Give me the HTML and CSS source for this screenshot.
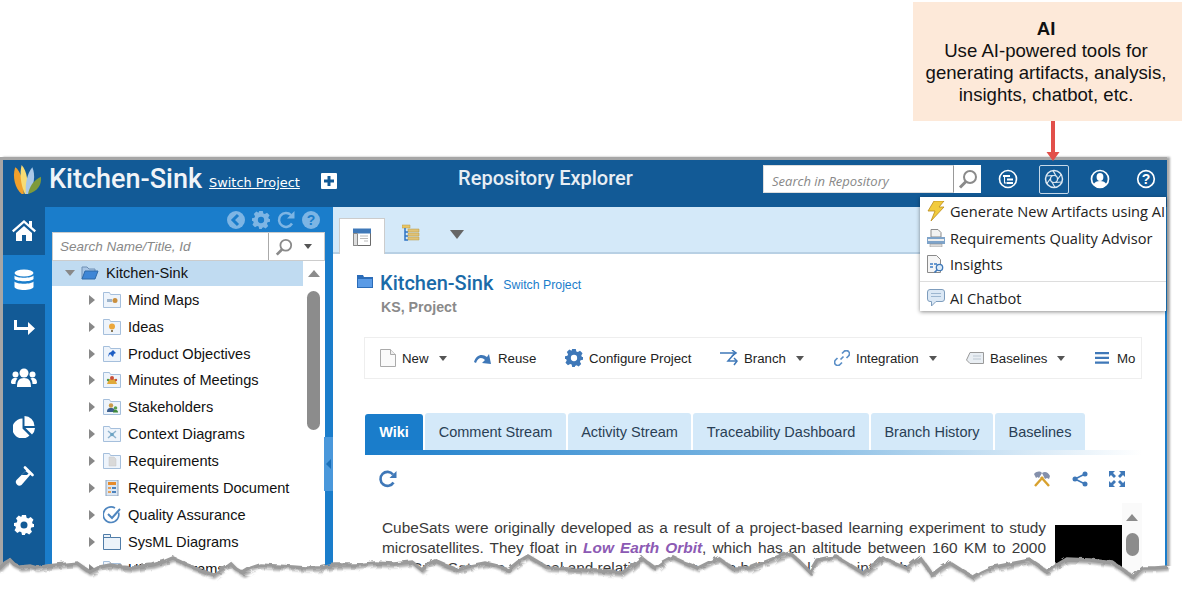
FILE: index.html
```html
<!DOCTYPE html>
<html lang="en">
<head>
<meta charset="UTF-8" />
<title>Repository Explorer</title>
<link rel="stylesheet" href="styles.css">
</head>
<body>

<div class="callout-row">
  <div class="callout">
    <b>AI</b><br>
    Use AI-powered tools for<br>
    generating artifacts, analysis,<br>
    insights, chatbot, etc.
  </div>
</div>
<svg class="arrow" width="14" height="42" viewBox="0 0 14 42"><path d="M5 0h4v31h4.500l-6.500 9-6.500-9H5z" fill="#e2504a"/></svg>

<div class="window">
  <header class="topbar">
    <div class="brand">
      <svg class="logo" width="30" height="30" viewBox="0 0 28 28">
        <path d="M9 27C3 22 0 11 3 2c5 3 8 14 8 25z" fill="#f0a02c"/>
        <path d="M12 27C8 18 7 8 9 0c5 5 7 18 4 27z" fill="#f8dc74"/>
        <path d="M13 27c-1-9 1-19 6-25 3 7 2 18-4 25z" fill="#a9c8e8"/>
        <path d="M15 27c1-6 5-13 12-16 1 7-3 14-12 16z" fill="#7e9a3a"/>
      </svg>
      <span class="brand-name">Kitchen-Sink</span>
      <a class="brand-link">Switch Project</a>
      <svg class="plus" width="16" height="16" viewBox="0 0 16 16"><path d="M1 0h14a1 1 0 0 1 1 1v14a1 1 0 0 1-1 1H1a1 1 0 0 1-1-1V1a1 1 0 0 1 1-1zm5.500 3v3.500H3v3h3.500V13h3V9.500H13v-3H9.500V3z" fill="#fff" fill-rule="evenodd"/></svg>
    </div>
    <div class="topbar-title">Repository Explorer</div>
    <div class="top-search">
      <span class="top-search-input">Search in Repository</span>
      <span class="top-search-btn">
        <svg width="20" height="20" viewBox="0 0 20 20"><circle cx="12" cy="8" r="6" fill="none" stroke="#8a8a8a" stroke-width="2"/><path d="M8 12.500 2 18.500" stroke="#8a8a8a" stroke-width="3"/></svg>
      </span>
    </div>
    <div class="top-icons">
      <span class="top-icon">
        <svg width="20" height="20" viewBox="0 0 20 20" fill="none" stroke="#fff"><circle cx="10" cy="10" r="8.500" stroke-width="1.600"/><path d="M5 7h7M9 10.500h6M9 14h6" stroke-width="1.800"/><path d="M6.500 7v7H9" stroke-width="1.100"/></svg>
      </span>
      <span class="top-icon is-active">
        <svg width="20" height="20" viewBox="0 0 20 20" fill="none" stroke="#dfe9f2" stroke-width="1.200"><circle cx="10" cy="10" r="8.500" stroke-width="1.500"/><circle cx="10" cy="10" r="3.500"/><path d="M12 7 9 1.600M13.500 10.500 17.500 5M11 13.500 17.800 13M8 13 11 18.500M6.500 9.500 2.500 15M9 6.500 2.200 7"/></svg>
      </span>
      <span class="top-icon">
        <svg width="20" height="20" viewBox="0 0 20 20"><circle cx="10" cy="10" r="8.500" fill="none" stroke="#fff" stroke-width="1.700"/><ellipse cx="10" cy="8" rx="3.400" ry="4" fill="#fff"/><path d="M3.500 15.500c1-2.500 3.500-3.500 6.500-3.500s5.500 1 6.500 3.500a8 8 0 0 1-13 0z" fill="#fff"/></svg>
      </span>
      <span class="top-icon">
        <svg width="20" height="20" viewBox="0 0 20 20"><circle cx="10" cy="10" r="8.300" fill="none" stroke="#fff" stroke-width="1.700"/><text x="10" y="15" text-anchor="middle" class="help-q">?</text></svg>
      </span>
    </div>
  </header>

  <div class="main">
    <nav class="rail">
      <a class="rail-item">
        <svg width="24" height="22" viewBox="0 0 24 22"><path d="M12 1 0 11.500l1.500 1.700L12 4l10.500 9.200 1.500-1.700-4-3.500V2h-3v3.400zM4 14v8h6v-6h4v6h6v-8l-8-7z" fill="#fff"/></svg>
      </a>
      <a class="rail-item is-active">
        <svg width="20" height="22" viewBox="0 0 20 22" fill="#fff"><ellipse cx="10" cy="4" rx="9.500" ry="3.500"/><path d="M.5 6.500c2 3 17 3 19 0V10c-2 3-17 3-19 0zM.5 12.500c2 3 17 3 19 0V18c-1 4-18 4-19 0z"/></svg>
      </a>
      <a class="rail-item">
        <svg width="22" height="18" viewBox="0 0 22 18"><path d="M1 0h3v7h11V2l7 6.500-7 6.500v-5H1z" fill="#fff"/></svg>
      </a>
      <a class="rail-item">
        <svg width="26" height="20" viewBox="0 0 26 20" fill="#fff"><circle cx="13" cy="5" r="4.500"/><circle cx="4.500" cy="6.500" r="3"/><circle cx="21.500" cy="6.500" r="3"/><path d="M6 19c0-6 2-9 7-9s7 3 7 9zM0 15c0-3 1-5 4.500-5 1 0 1.500.3 2 .5C5 12 4.500 14 4.500 16H1zM26 15c0-3-1-5-4.500-5-1 0-1.500.3-2 .5 1.500 1.500 2 3.500 2 5.500H25z"/></svg>
      </a>
      <a class="rail-item">
        <svg width="22" height="22" viewBox="0 0 22 22" fill="#fff"><path d="M9.500 2.500v10l7 7A10 10 0 1 1 9.500 2.500z"/><path d="M11.500 0a10 10 0 0 1 10 10h-10z"/><path d="M12.500 12h9.500a10 10 0 0 1-3 6.500z"/></svg>
      </a>
      <a class="rail-item">
        <svg width="20" height="20" viewBox="0 0 20 20"><path d="M11 1.500l7.500 7.500" stroke="#fff" stroke-width="2.600" stroke-linecap="round"/><path d="M13 3.500 2.500 14a3.600 3.600 0 0 0 5 5L17 8z" fill="#fff"/><path d="M11.500 5 7.500 9h5.500l1.500-1.500z" fill="#125a96"/></svg>
      </a>
      <a class="rail-item">
        <svg width="20" height="20" viewBox="0 0 20 20"><path fill="#fff" fill-rule="evenodd" d="M8 0h4l.6 2.700 1.700.7 2.400-1.400 2.800 2.800-1.400 2.400.7 1.700L20 9v3l-2.700.6-.7 1.700 1.400 2.400-2.800 2.800-2.400-1.400-1.700.7L11 20H8l-.6-2.700-1.700-.7-2.400 1.400L.5 15.200l1.400-2.400-.7-1.700L0 11V8l2.700-.6.700-1.700L2 3.300 4.800.5l2.400 1.400zM10 6.500a3.500 3.500 0 1 0 0 7 3.500 3.500 0 0 0 0-7z"/></svg>
      </a>
    </nav>

    <section class="tree-panel">
      <div class="tree-tools">
        <svg width="18" height="18" viewBox="0 0 18 18"><circle cx="9" cy="9" r="9" fill="#7db5e4"/><path d="M11 4 6 9l5 5" fill="none" stroke="#1a7dcb" stroke-width="3"/></svg>
        <svg width="18" height="18" viewBox="0 0 20 20"><path fill="#7db5e4" fill-rule="evenodd" d="M8 0h4l.6 2.700 1.700.7 2.400-1.400 2.800 2.800-1.400 2.400.7 1.700L20 9v3l-2.700.6-.7 1.700 1.400 2.400-2.800 2.800-2.400-1.400-1.700.7L11 20H8l-.6-2.700-1.700-.7-2.400 1.400L.5 15.200l1.400-2.400-.7-1.700L0 11V8l2.700-.6.700-1.700L2 3.300 4.800.5l2.400 1.400zM10 6.500a3.500 3.500 0 1 0 0 7 3.500 3.500 0 0 0 0-7z"/></svg>
        <svg width="18" height="18" viewBox="0 0 18 18"><path d="M15 12.500A7 7 0 1 1 14 4" fill="none" stroke="#7db5e4" stroke-width="2.500"/><path d="M17.500 0v7.500H10z" fill="#7db5e4"/></svg>
        <svg width="18" height="18" viewBox="0 0 18 18"><circle cx="9" cy="9" r="9" fill="#7db5e4"/><text x="9" y="14" text-anchor="middle" class="tool-q">?</text></svg>
      </div>
      <div class="tree-search">
        <span class="tree-search-input">Search Name/Title, Id</span>
        <span class="tree-search-btn">
          <svg width="18" height="18" viewBox="0 0 20 20"><circle cx="12" cy="8" r="6" fill="none" stroke="#8a8a8a" stroke-width="2"/><path d="M8 12.500 2 18.500" stroke="#8a8a8a" stroke-width="3"/></svg>
          <i class="caret"></i>
        </span>
      </div>
      <div class="tree-body">
        <ul class="tree">
          <li class="tree-root">
            <i class="twist twist-open"></i>
            <svg class="node-icon" width="18" height="14" viewBox="0 0 18 14"><path d="M1 13V1h5l2 2h6v3" fill="#a9c6e6" stroke="#6f8fb4"/><path d="M1 13 4 5h13l-3 8z" fill="#3e86d6" stroke="#2f6aa8"/></svg>
            Kitchen-Sink
          </li>
          <li><i class="twist"></i><svg class="node-icon" width="18" height="16" viewBox="0 0 18 16"><use href="#folder"/><path d="M4 7h5v3H4z" fill="#9db4cc"/><circle cx="12" cy="8.500" r="2.500" fill="#c98f3e"/></svg>Mind Maps</li>
          <li><i class="twist"></i><svg class="node-icon" width="18" height="16" viewBox="0 0 18 16"><use href="#folder"/><circle cx="9" cy="7.500" r="3" fill="#eba73b"/><path d="M8 11h2v2H8z" fill="#8a7a5a"/></svg>Ideas</li>
          <li><i class="twist"></i><svg class="node-icon" width="18" height="16" viewBox="0 0 18 16"><use href="#folder"/><path d="M10 4l3 3-2 1-1 3-3-3-2 3 1-4 2-1z" fill="#1f5fc4"/></svg>Product Objectives</li>
          <li><i class="twist"></i><svg class="node-icon" width="18" height="16" viewBox="0 0 18 16"><use href="#folder"/><path d="M4 12l2-5h6l2 5z" fill="#e0a93a"/><circle cx="9" cy="6" r="2" fill="#c9503c"/><circle cx="5" cy="8" r="1.200" fill="#4d9a4a"/><circle cx="13" cy="8" r="1.200" fill="#c9503c"/></svg>Minutes of Meetings</li>
          <li><i class="twist"></i><svg class="node-icon" width="18" height="16" viewBox="0 0 18 16"><use href="#folder"/><circle cx="8" cy="6.500" r="2.200" fill="#c99a4a"/><path d="M4 13c0-3 1-4 4-4s4 1 4 4z" fill="#3c5f8e"/><circle cx="12.500" cy="9" r="1.800" fill="#5aa04a"/><path d="M10 13.500c0-2 1-2.500 2.500-2.500s2.500.5 2.500 2.500z" fill="#3f8a3a"/></svg>Stakeholders</li>
          <li><i class="twist"></i><svg class="node-icon" width="18" height="16" viewBox="0 0 18 16"><use href="#folder"/><path d="M5 5l8 7M13 5l-8 7" stroke="#8db3cf" stroke-width="1.500"/><circle cx="9" cy="8.500" r="1.800" fill="#6ba4c4"/></svg>Context Diagrams</li>
          <li><i class="twist"></i><svg class="node-icon" width="18" height="16" viewBox="0 0 18 16"><use href="#folder"/><path d="M6 4h5l2 2v7H6z" fill="#d9d9d9" stroke="#c4c4c4" stroke-width=".5"/></svg>Requirements</li>
          <li><i class="twist"></i><svg class="node-icon" width="18" height="16" viewBox="0 0 18 16"><path d="M3 0h12v16H3z" fill="#dbe6f2" stroke="#8ca3bd"/><path d="M5 2h8v3H5z" fill="#e58a2c"/><path d="M5 7h3v2H5zM5 11h3v2H5z" fill="#e5a15c"/><path d="M9 7h4v2H9zM9 11h4v2H9z" fill="#4d82bc"/></svg>Requirements Document</li>
          <li><i class="twist"></i><svg class="node-icon" width="18" height="18" viewBox="0 0 18 18"><path d="M15.500 6.500A7.800 7.800 0 1 1 12 2" fill="none" stroke="#4f86bf" stroke-width="1.700"/><path d="M5 8l4 4 8-9" fill="none" stroke="#4f86bf" stroke-width="2"/></svg>Quality Assurance</li>
          <li><i class="twist"></i><svg class="node-icon" width="18" height="16" viewBox="0 0 18 16"><path d="M.5 15.500V.5h7v3h10v12z" fill="#ecf3fa" stroke="#4f7ca8"/><path d="M.5 3.500h7" stroke="#4f7ca8"/></svg>SysML Diagrams</li>
          <li><i class="twist"></i><svg class="node-icon" width="18" height="16" viewBox="0 0 18 16"><use href="#folder"/></svg>UML Diagrams</li>
        </ul>
        <div class="tree-scroll">
          <i class="scroll-up"></i>
          <div class="tree-thumb"></div>
        </div>
      </div>
      <div class="splitter"><i></i></div>
    </section>

    <section class="content">
      <div class="view-tabs">
        <span class="view-tab is-active">
          <svg width="18" height="18" viewBox="0 0 18 18"><path d="M.5 3.500h17v14H.5z" fill="#fff" stroke="#6b6b6b"/><path d="M0 .500h18v5H0z" fill="#3f78b8"/><path d="M.5 5.500h4v12h-4z" fill="#ddd" stroke="#8a8a8a"/><path d="M7 8h8M7 10.500h8M11 13h4" stroke="#bbb"/></svg>
        </span>
        <span class="view-tab">
          <svg width="18" height="18" viewBox="0 0 18 18"><path d="M0 1h8v3H0z" fill="#e8c565" stroke="#b89a46" stroke-width=".5"/><path d="M3 4v12h3M3 8h3M3 12h3" stroke="#2f74c4" stroke-width="1.500" fill="none"/><path d="M6 5h11v3H6zM6 9h11v3H6zM6 13h11v3H6z" fill="#e0c277" stroke="#b89a46" stroke-width=".5"/></svg>
        </span>
        <i class="view-more"></i>
      </div>

      <div class="page">
        <div class="page-head">
          <svg class="page-folder" width="16" height="14" viewBox="0 0 16 14"><path d="M0 1h6l1 2h9v11H0z" fill="#2b6cb8"/><path d="M1 5h14v8H1z" fill="#5a9be6"/></svg>
          <h1 class="page-title">Kitchen-Sink</h1>
          <a class="page-switch">Switch Project</a>
        </div>
        <div class="page-sub">KS, Project</div>

        <div class="actions">
          <span class="action w-new">
            <svg width="16" height="18" viewBox="0 0 16 18"><path d="M.5.500h10l5 5v12H.5z" fill="#fafafa" stroke="#aaa"/><path d="M10.500.500v5h5" fill="#eee" stroke="#aaa"/></svg>New<i class="caret"></i>
          </span>
          <span class="action w-reuse">
            <svg width="18" height="14" viewBox="0 0 18 14"><path d="M0 11C2 4 8 2 13 6l2-3 2 10-9-1 3-3C8 6 4 6 2 12z" fill="#3f78b8"/></svg>Reuse
          </span>
          <span class="action w-config">
            <svg width="18" height="18" viewBox="0 0 20 20"><path fill="#3f78b8" fill-rule="evenodd" d="M8 0h4l.6 2.700 1.700.7 2.400-1.400 2.800 2.800-1.400 2.400.7 1.700L20 9v3l-2.700.6-.7 1.700 1.400 2.400-2.800 2.800-2.400-1.400-1.700.7L11 20H8l-.6-2.700-1.700-.7-2.400 1.400L.5 15.200l1.400-2.400-.7-1.700L0 11V8l2.700-.6.700-1.700L2 3.300 4.800.5l2.400 1.400zM10 6.500a3.500 3.500 0 1 0 0 7 3.500 3.500 0 0 0 0-7z"/></svg>Configure Project
          </span>
          <span class="action w-branch">
            <svg width="18" height="16" viewBox="0 0 18 16" fill="none" stroke="#3f78b8" stroke-width="1.500"><path d="M0 3h15l-7 8h9"/><path d="M12 0l4 3-4 3M14 8l3 3-3 4"/></svg>Branch<i class="caret"></i>
          </span>
          <span class="action w-integ">
            <svg width="16" height="16" viewBox="0 0 16 16" fill="none" stroke="#5b8fc7" stroke-width="1.700"><path d="M6.500 9.500 9.500 6.500M8 3.500l2-2a3 3 0 0 1 4.500 4.500l-2 2M8 12.500l-2 2A3 3 0 0 1 1.500 10l2-2"/></svg>Integration<i class="caret"></i>
          </span>
          <span class="action w-base">
            <svg width="18" height="12" viewBox="0 0 18 12"><path d="M4 .5h13.500v11H4L.5 8z" fill="#e9eef3" stroke="#9a9a9a"/><path d="M7 4h8M7 7h8" stroke="#bcc7d2"/></svg>Baselines<i class="caret"></i>
          </span>
          <span class="action w-more">
            <svg width="14" height="12" viewBox="0 0 14 12" fill="#3f78b8"><path d="M0 0h14v2.200H0zM0 4.800h14V7H0zM0 9.600h14v2.200H0z"/></svg>Mo
          </span>
        </div>

        <div class="tabs">
          <span class="tab is-active w-wiki">Wiki</span>
          <span class="tab w-comment">Comment Stream</span>
          <span class="tab w-activity">Activity Stream</span>
          <span class="tab w-trace">Traceability Dashboard</span>
          <span class="tab w-history">Branch History</span>
          <span class="tab w-baselines">Baselines</span>
        </div>
        <div class="tabs-line"></div>

        <div class="wiki-tools">
          <svg width="18" height="18" viewBox="0 0 18 18"><path d="M14.500 12.500A7 7 0 1 1 14 4.500" fill="none" stroke="#3f78b8" stroke-width="2.600"/><path d="M17.500 1v7h-7z" fill="#3f78b8"/></svg>
          <span class="wiki-tools-right">
            <svg width="18" height="16" viewBox="0 0 18 16"><path d="M2 15 10 6M16 15 8 6" stroke="#d8a12e" stroke-width="2.400"/><path d="M1 3c3-3 6-3 8-1l-3 5-1.500-1L3 7zM9 2c3-2 6-1 8 3l-1 3-2-1-2 1z" fill="#8490ab"/></svg>
            <svg width="16" height="16" viewBox="0 0 16 16" fill="#3f78b8"><circle cx="13" cy="3" r="2.500"/><circle cx="3" cy="8" r="2.500"/><circle cx="13" cy="13" r="2.500"/><path d="M3 8l10-5M3 8l10 5" stroke="#3f78b8" stroke-width="1.500"/></svg>
            <svg width="16" height="16" viewBox="0 0 16 16" fill="#3f78b8"><path d="M0 0h6L4 2l3 3-2 2-3-3-2 2zM16 0v6l-2-2-3 3-2-2 3-3-2-2zM0 16v-6l2 2 3-3 2 2-3 3 2 2zM16 16h-6l2-2-3-3 2-2 3 3 2-2z"/></svg>
          </span>
        </div>

        <div class="wiki">
          <p class="wiki-text">CubeSats were originally developed as a result of a project-based learning experiment to study microsatellites. They float in <b class="wiki-link">Low Earth Orbit</b>, which has an altitude between 160 KM to 2000 km. CubeSats are nominal and relatively low-cost to build and launch into orbit.</p>
          <div class="wiki-img"></div>
          <div class="wiki-scroll">
            <i class="scroll-up"></i>
            <div class="wiki-thumb"></div>
          </div>
        </div>
      </div>
    </section>
  </div>

  <div class="ai-menu">
    <div class="ai-item">
      <svg width="18" height="20" viewBox="0 0 18 20"><path d="M7 0h10l-5 6h5L4 20l4-10H1z" fill="#f2cb3c" stroke="#b98a1d" stroke-width=".8"/></svg>
      Generate New Artifacts using AI
    </div>
    <div class="ai-item">
      <svg width="18" height="18" viewBox="0 0 18 18"><path d="M4 .5h7l3 3V8H4z" fill="#f2f2f2" stroke="#8a8a8a"/><path d="M0 8h18v7H0z" fill="#7ea3c9"/><path d="M1 11h16" stroke="#eee" stroke-width="2"/><path d="M3 15h12v3H3z" fill="#dcdcdc" stroke="#8a8a8a" stroke-width=".5"/></svg>
      Requirements Quality Advisor
    </div>
    <div class="ai-item">
      <svg width="18" height="18" viewBox="0 0 18 18"><path d="M.5.500h9l4 4v13H.5z" fill="#f5f5f5" stroke="#8a8a8a"/><path d="M3 8h3v2H3zM3 11h3v2H3zM7 8h3v2H7z" fill="#6a9ad0"/><circle cx="12.500" cy="12.500" r="3.200" fill="#dcebf8" stroke="#3f78b8" stroke-width="1.300"/><path d="M10 15l-2.500 2.500" stroke="#3f78b8" stroke-width="1.700"/></svg>
      Insights
    </div>
    <div class="ai-sep"></div>
    <div class="ai-item">
      <svg width="18" height="18" viewBox="0 0 18 18"><path d="M3 .5h12a2.500 2.500 0 0 1 2.500 2.500v7a2.500 2.500 0 0 1-2.500 2.500H9L4.500 17v-4.500H3A2.500 2.500 0 0 1 .5 10V3A2.500 2.500 0 0 1 3 .5z" fill="#dbe8f5" stroke="#7e9dbd"/><path d="M4 4.500h10M4 7.500h10" stroke="#9cb6d0"/></svg>
      AI Chatbot
    </div>
  </div>
</div>

<svg class="defs" width="0" height="0">
  <symbol id="folder" viewBox="0 0 18 16"><path d="M.5 15.500V.5h6l1 2h10v13z" fill="#eef4fb" stroke="#a5bfdc"/></symbol>
</svg>

<!-- torn edge at the bottom of the capture -->
<svg class="tear" width="1184" height="60" viewBox="0 532 1184 60">
  <filter id="rough" x="-2%" y="-30%" width="104%" height="160%">
    <feTurbulence type="fractalNoise" baseFrequency="0.12" numOctaves="2" seed="4" result="n"/>
    <feDisplacementMap in="SourceGraphic" in2="n" scale="5"/>
  </filter>
  <g filter="url(#rough)">
    <path class="tear-fill" d="M-20 568 0 568 5 563 10 560 14 564 20 567 30 566 37 568 47 566 57 565 68 564 77 563 84 568 90 572 100 567 110 565 122 567 133 568 143 566 153 565 163 562 173 558 180 561 187 565 200 570 213 575 222 569 230 563 236 569 243 573 251 568 260 565 276 566 293 567 306 568 320 568 335 565 355 565 375 563 394 564 412 562 417 566 422 570 428 564 435 561 447 566 458 570 470 566 485 563 497 566 508 570 518 562 528 556 538 562 548 568 570 569 598 571 622 573 632 566 642 558 648 563 655 568 663 562 672 557 685 563 698 568 708 563 718 558 725 563 732 568 750 568 760 564 770 560 780 556 790 553 800 562 810 572 817 560 827 558 837 557 850 565 863 573 873 565 883 558 895 563 907 568 913 563 920 558 926 566 932 575 941 568 950 563 961 570 973 577 981 572 990 568 1010 564 1030 560 1039 566 1047 572 1057 565 1067 559 1090 560 1113 563 1123 570 1133 577 1138 572 1143 568 1155 568 1168 567 1200 567 1200 610 -20 610z"/>
    <path class="tear-line" d="M-10 568 0 568 5 563 10 560 14 564 20 567 30 566 37 568 47 566 57 565 68 564 77 563 84 568 90 572 100 567 110 565 122 567 133 568 143 566 153 565 163 562 173 558 180 561 187 565 200 570 213 575 222 569 230 563 236 569 243 573 251 568 260 565 276 566 293 567 306 568 320 568 335 565 355 565 375 563 394 564 412 562 417 566 422 570 428 564 435 561 447 566 458 570 470 566 485 563 497 566 508 570 518 562 528 556 538 562 548 568 570 569 598 571 622 573 632 566 642 558 648 563 655 568 663 562 672 557 685 563 698 568 708 563 718 558 725 563 732 568 750 568 760 564 770 560 780 556 790 553 800 562 810 572 817 560 827 558 837 557 850 565 863 573 873 565 883 558 895 563 907 568 913 563 920 558 926 566 932 575 941 568 950 563 961 570 973 577 981 572 990 568 1010 564 1030 560 1039 566 1047 572 1057 565 1067 559 1090 560 1113 563 1123 570 1133 577 1138 572 1143 568 1155 568 1168 567"/>
  </g>
</svg>

</body>
</html>
```

FILE: styles.css
```css
* { box-sizing: border-box; }
html, body { margin: 0; padding: 0; height: 592px; overflow: hidden; background: #fff; }
body { font-family: "Liberation Sans", Arial, sans-serif; position: relative; width: 1184px; }
i { display: inline-block; font-style: normal; }
a { cursor: pointer; }

/* callout */
.callout-row { height: 157px; padding: 2px 2px 0 0; display: flex; justify-content: flex-end; }
.callout {
  width: 269px; height: 119px; background: #fde9d9; color: #111;
  font-size: 18.600px; line-height: 22px; text-align: center; padding: 16px 3px 0 0;
}
.arrow { position: absolute; left: 1046px; top: 121px; z-index: 5; }

/* window */
.window {
  position: relative; width: 1167px; height: 435px;
  border-top: 3px solid #a6a6a6; border-left: 3px solid #a6a6a6;
  box-shadow: 3px 0 2px #aaa;
  display: flex; flex-direction: column;
}
.topbar { height: 47px; background: #125a96; display: flex; align-items: center; color: #fff; flex: none; padding-bottom: 6px; }
.brand { width: 333px; flex: none; display: flex; align-items: center; padding-left: 9px; white-space: nowrap; }
.logo { flex: none; margin-top: -2px; }
.brand-name { font-family: Roboto, sans-serif; font-weight: 500; font-size: 27px; margin-left: 7px; color: #f0f4f8; margin-top: -3px; }
.brand-link { font-family: "DejaVu Sans", sans-serif; font-size: 12.900px; color: #fff; text-decoration: underline; margin-left: 7px; margin-top: 4px; }
.plus { margin-left: 21px; flex: none; }
.topbar-title { width: 427px; flex: none; font-family: Roboto, sans-serif; font-weight: 500; font-size: 20px; color: #e8eef4; text-align: center; margin-top: -5px; padding-right: 8px; }
.top-search { display: flex; width: 218px; height: 28px; margin-top: -3px; background: #fff; flex: none; }
.top-search-input { flex: 1; padding: 6px 0 0 8px; font-family: "Open Sans", sans-serif; font-style: italic; font-size: 13px; color: #888; border: 1px solid #ddd; border-right: 1px solid #999; }
.top-search-btn { width: 27px; display: flex; align-items: center; justify-content: center; }
.top-icons { display: flex; align-items: center; margin-left: 12px; gap: 16px; margin-top: -3px; }
.top-icon { width: 30px; height: 29px; display: flex; align-items: center; justify-content: center; border-radius: 2px; border: 1px solid transparent; }
.top-icon.is-active { border-color: #c5d8e8; }
.help-q { font: bold 14px "Liberation Sans", sans-serif; fill: #fff; }
.tool-q { font: bold 14px "Liberation Sans", sans-serif; fill: #1a7dcb; }

.main { flex: 1; display: flex; min-height: 0; }
.rail { width: 42px; flex: none; background: #125a96; display: flex; flex-direction: column; }
.rail-item { height: 49px; display: flex; align-items: center; justify-content: center; flex: none; }
.rail-item:first-child { height: 48px; padding-bottom: 2px; }
.rail-item.is-active { background: #1a7dcb; }

/* tree */
.tree-panel { position: relative; width: 288px; flex: none; background: #1a7dcb; padding: 0 8px 0 7px; overflow: hidden; }
.tree-tools { height: 25px; display: flex; justify-content: flex-end; align-items: center; gap: 7px; padding: 1px 5px 0 0; }
.tree-search { display: flex; height: 29px; background: #fff; border: 1px solid #ccc; }
.tree-search-input { flex: 1; padding: 6px 0 0 7px; font-style: italic; font-size: 13.500px; color: #888; border-right: 1px solid #aaa; }
.tree-search-btn { width: 55px; display: flex; align-items: center; gap: 11px; padding-left: 6px; }
.caret { display: inline-block; width: 0; height: 0; border: 4.500px solid transparent; border-top: 5px solid #555; border-bottom: 0; }
.tree-body { background: #fff; display: flex; height: 331px; }
.tree { list-style: none; margin: 0; padding: 0; width: 251px; flex: none; font-size: 14.600px; color: #111; }
.tree li { height: 26.900px; display: flex; align-items: center; padding-left: 37px; white-space: nowrap; }
.tree li.tree-root { background: #c0dbf1; padding: 0 0 2px 13px; height: 25px; margin-bottom: .300px; }
.twist { width: 0; height: 0; border-left: 6px solid #888; border-top: 5px solid transparent; border-bottom: 5px solid transparent; margin-right: 8px; flex: none; }
.twist-open { border-left: 5px solid transparent; border-right: 5px solid transparent; border-top: 6px solid #888; border-bottom: 0; margin-right: 6px; }
.node-icon { margin-right: 7px; flex: none; }
.tree-scroll { flex: 1; display: flex; flex-direction: column; align-items: center; padding-top: 9px; }
.scroll-up { width: 0; height: 0; border-left: 6.500px solid transparent; border-right: 6.500px solid transparent; border-bottom: 7px solid #8c8c8c; flex: none; }
.tree-thumb { width: 13px; height: 139px; margin-top: 14px; border-radius: 7px; background: #8c8c8c; margin-right: 1px; flex: none; }
.splitter { position: absolute; right: 0; top: 230px; width: 9px; height: 54px; background: #4a98db; display: flex; align-items: center; justify-content: center; }
.splitter i { width: 0; height: 0; border-right: 5px solid #1a6fb8; border-top: 5px solid transparent; border-bottom: 5px solid transparent; }

/* content */
.content { flex: 1; min-width: 0; background: #fff; border-right: 2px solid #1a7dcb; overflow: hidden; }
.view-tabs { height: 47px; background: #d4e9f9; border-bottom: 2px solid #b8d0e4; display: flex; align-items: flex-end; padding-left: 6px; }
.view-tab { width: 46px; height: 36px; display: flex; align-items: center; justify-content: center; padding-bottom: 2px; }
.view-tab.is-active { background: #fff; border: 1px solid #ccc; border-bottom: 0; height: 36px; margin-bottom: -2px; padding-bottom: 0; }
.view-tab + .view-tab { margin-left: 3px; }
.view-more { width: 0; height: 0; border-left: 7px solid transparent; border-right: 7px solid transparent; border-top: 9px solid #666; margin: 0 0 13px 16px; }
.page { padding: 17px 24px 0 31px; }
.page-head { display: flex; align-items: center; height: 24px; margin-left: -7px; }
.page-folder { margin: -4px 7px 0 0; flex: none; }
.page-title { font-family: Roboto, sans-serif; font-weight: 500; font-size: 20px; color: #1a6aa8; margin: 0; }
.page-switch { font-size: 12.300px; color: #1a7dcb; margin: 4px 0 0 10px; }
.page-sub { font-size: 14.200px; font-weight: bold; color: #8a8a8a; margin: 4px 0 0 17px; height: 18px; }
.actions {
  height: 42px; margin-top: 20px; border: 1px solid #eee; display: flex; align-items: center;
  padding-left: 15px; font-size: 13.250px; color: #222; overflow: hidden; white-space: nowrap;
  width: 778px;
}
.action { display: flex; align-items: center; gap: 6px; flex: none; }
.action .caret { margin-left: 4px; }
.w-new { width: 94px; }
.w-reuse { width: 91px; }
.w-config { width: 155px; }
.w-branch { width: 114px; }
.w-integ { width: 132px; }
.w-base { width: 129px; }
.w-more { gap: 8px; }
.tabs { display: flex; gap: 2px; margin: 34px 0 0 1px; height: 37px; align-items: flex-end; font-size: 14.500px; color: #2a3f55; }
.tab { height: 37px; background: #d4e9f9; border-radius: 3px 3px 0 0; display: flex; align-items: center; justify-content: center; flex: none; }
.tab.is-active { background: #1a7dcb; color: #fff; font-weight: bold; }
.w-wiki { width: 58px; height: 36px; }
.w-comment { width: 141px; }
.w-activity { width: 123px; }
.w-trace { width: 176px; }
.w-history { width: 122px; }
.w-baselines { width: 90px; }
.tabs-line { height: 5px; width: 777px; margin-left: 1px; background: linear-gradient(to right, #1a7dcb, #8fc1e6 60%, #fff); }
.wiki-tools { display: flex; justify-content: space-between; align-items: center; height: 48px; padding: 0 15px; width: 778px; }
.wiki-tools-right { display: flex; gap: 21px; padding-right: 2px; }
.wiki { display: flex; width: 778px; height: 90px; overflow: hidden; }
.wiki-text { width: 664px; margin: 15px 0 0 18px; font-size: 15.400px; line-height: 20px; color: #3a3a3a; text-align: justify; flex: none; }
.wiki-link { color: #8c5ab4; font-style: italic; }
.wiki-img { width: 67px; height: 66px; background: #000; margin: 22px 0 0 9px; flex: none; }
.wiki-scroll { width: 20px; background: #fafafa; display: flex; flex-direction: column; align-items: center; padding-top: 11px; flex: none; height: 90px; }
.wiki-thumb { width: 13px; height: 23px; background: #8c8c8c; border-radius: 7px; margin-top: 12px; flex: none; }

/* AI dropdown */
.ai-menu {
  position: absolute; left: 917px; top: 37px; width: 246px; height: 114px;
  background: #fff; box-shadow: 0 1px 4px rgba(0,0,0,.45); z-index: 4; overflow: hidden;
  font-family: "Open Sans", sans-serif; font-size: 14.600px; color: #222; padding-top: 1px;
}
.ai-item { height: 26.500px; display: flex; align-items: center; gap: 5px; padding-left: 7px; white-space: nowrap; }
.ai-sep { height: 1px; background: #ddd; margin: 3px 0; }
.defs { position: absolute; }

/* torn edge at the bottom of the capture */
.tear { position: absolute; left: 0; top: 532px; z-index: 6; }
.tear-fill { fill: #fff; }
.tear-line { fill: none; stroke: #9a9a9a; stroke-width: 3.500; filter: drop-shadow(1px 2px 1px rgba(0,0,0,.35)); }
```
